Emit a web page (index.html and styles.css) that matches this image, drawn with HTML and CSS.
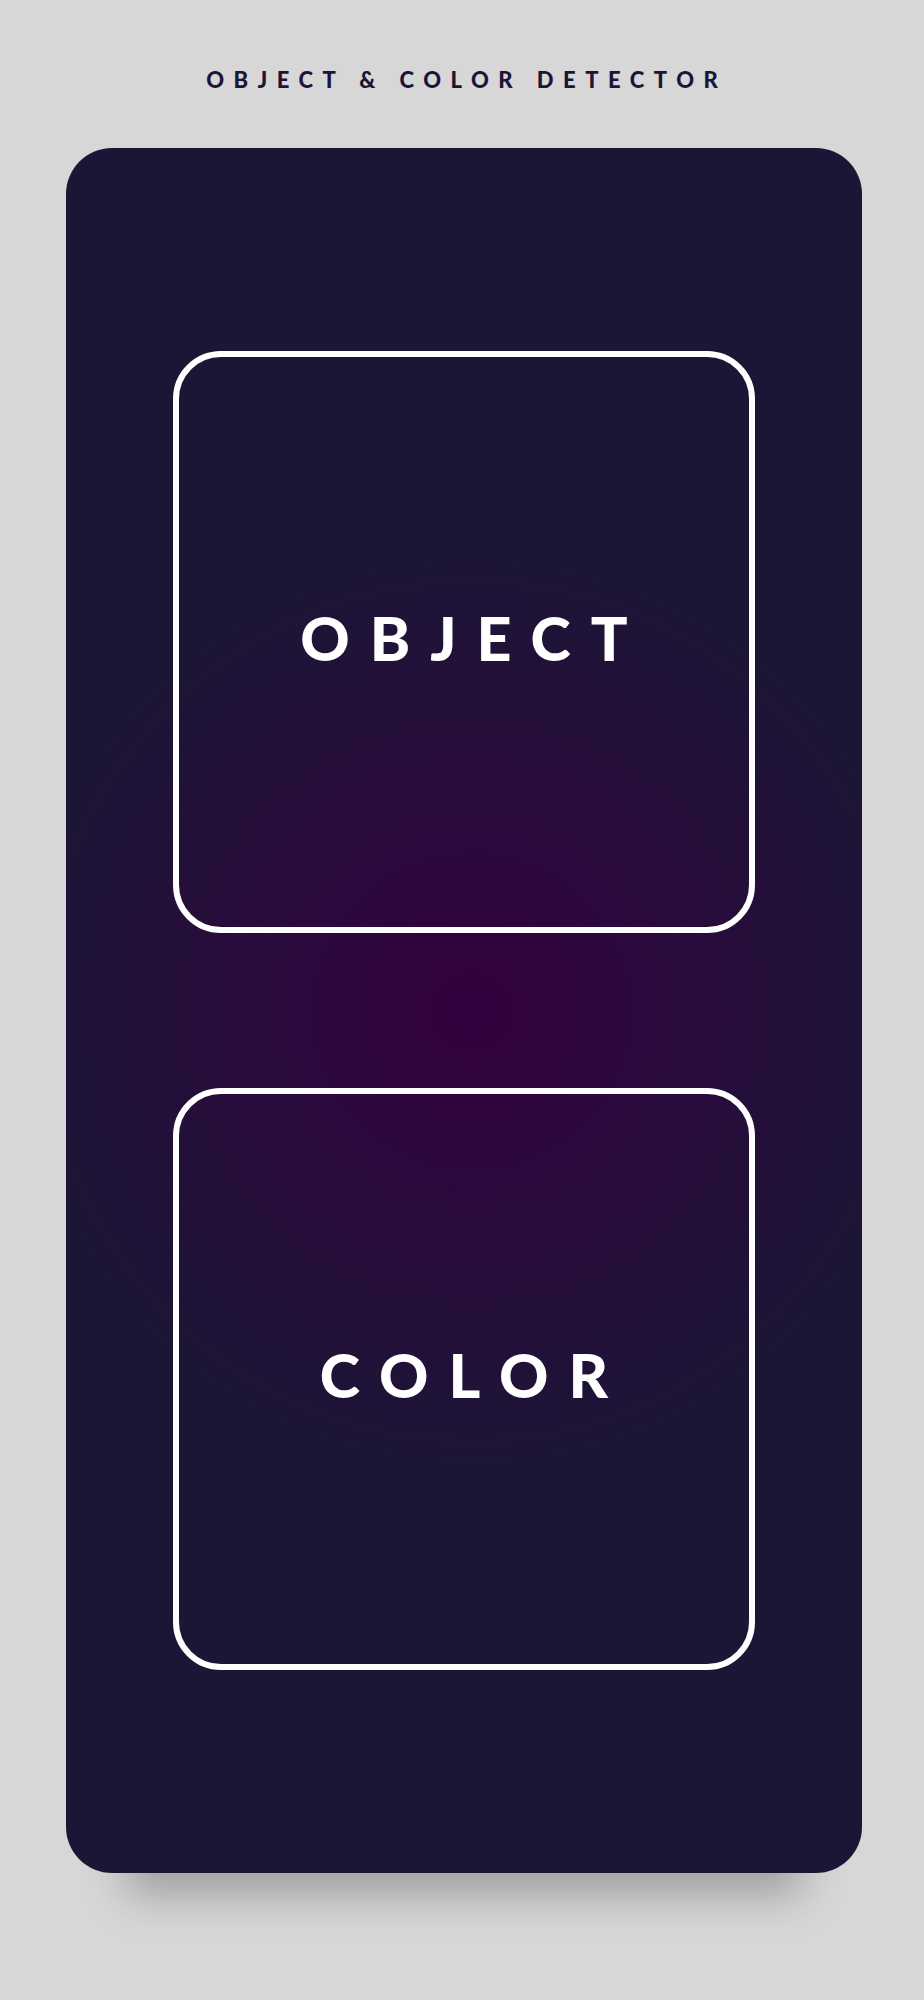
FILE: index.html
```html
<!DOCTYPE html>
<html lang="en">
<head>
    <meta charset="UTF-8">
    <meta name="viewport" content="width=device-width, initial-scale=1.0">
    <title>Object &amp; Color Detector</title>
    <link rel="stylesheet" href="styles.css">
</head>
<body>
    <h1 class="title">OBJECT &amp; COLOR DETECTOR</h1>
    <div class="card">
        <button class="mode" id="object-mode">OBJECT</button>
        <button class="mode" id="color-mode">COLOR</button>
    </div>
</body>
</html>
```

FILE: styles.css
```css
body {
    font-family: Lato, "Liberation Sans", sans-serif;
    margin: 0;
    padding: 0 0 127px;
    background-color: #d7d7d7;
}
.title {
    margin: 0;
    padding-top: 69px;
    font-size: 22px;
    line-height: 22px;
    font-weight: 900;
    letter-spacing: 9.5px;
    text-indent: 9.5px;
    text-align: center;
    color: #1b1635;
}
.card {
    width: 796px;
    height: 1725px;
    margin: 57px 0 0 66px;
    box-sizing: border-box;
    padding-top: 203px;
    display: flex;
    flex-direction: column;
    align-items: center;
    gap: 155px;
    border-radius: 46px;
    background: radial-gradient(circle at 51% 50%, #33003f 0, #2a0a3d 200px, #1b1635 470px);
    box-shadow: 0 82px 40px -60px rgba(0, 0, 0, 0.26);
}
.mode {
    width: 582px;
    height: 582px;
    box-sizing: border-box;
    padding: 0 0 9px 20px;
    border: 6px solid #ffffff;
    border-radius: 48px;
    background: transparent;
    color: #ffffff;
    font-family: inherit;
    font-size: 61px;
    line-height: 61px;
    font-weight: 900;
    letter-spacing: 20px;
    cursor: pointer;
}
```
